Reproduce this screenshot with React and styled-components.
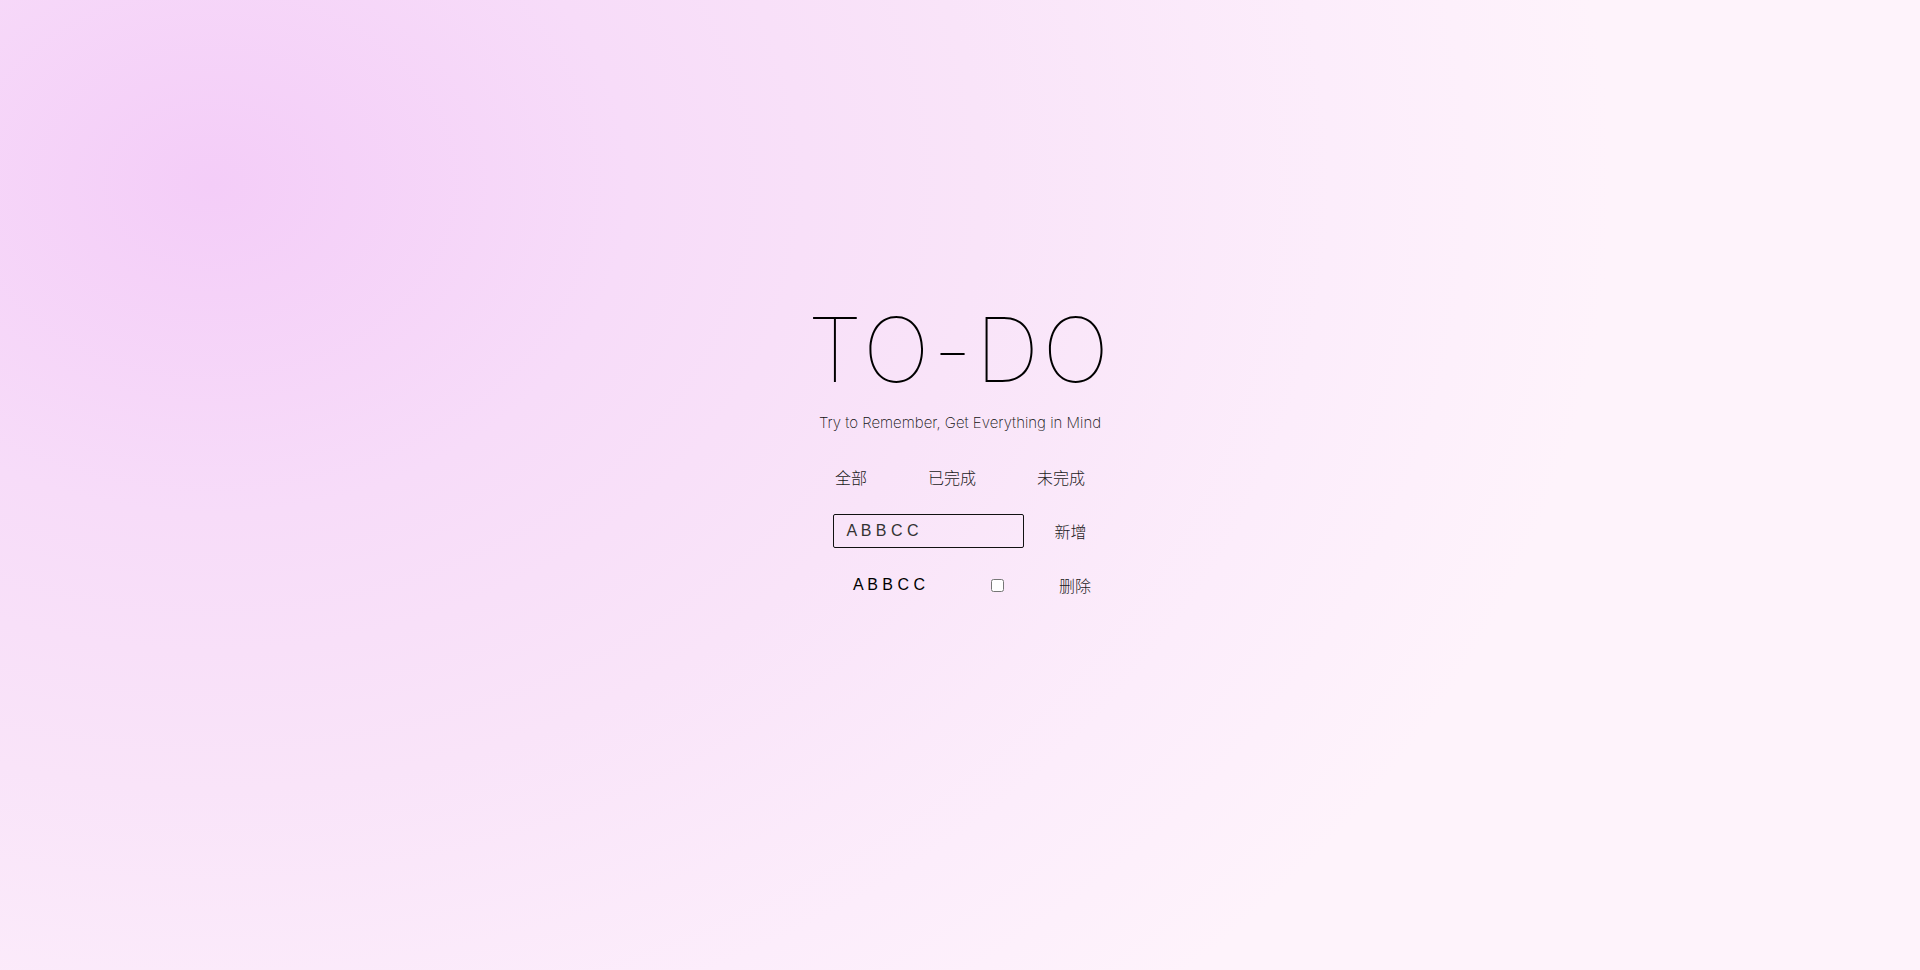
import React, { useState } from "react";
import styled, { createGlobalStyle } from "styled-components";

const GlobalStyle = createGlobalStyle`
  html, body { margin: 0; padding: 0; }
  body {
    font-family: "Liberation Sans", "Noto Sans CJK SC", sans-serif;
    color: #111;
  }
`;

const Page = styled.div`
  min-height: 970px;
  box-sizing: border-box;
  padding-top: 305px;
  display: flex;
  flex-direction: column;
  align-items: center;
  background:
    radial-gradient(ellipse 1400px 1100px at 11% 19%, #f4cdf8 0%, #f7dcf9 30%, #f9e4f9 55%, #fcedfb 80%, #fef3fb 100%);
`;

const Title = styled.h1`
  margin: 0;
  font-family: "Inter", "Lato", sans-serif;
  font-weight: 100;
  font-size: 89px;
  line-height: 1;
  letter-spacing: 3.5px;
  color: #000;
`;

const Subtitle = styled.p`
  margin: 19px 0 0;
  font-family: "Inter", "Lato", sans-serif;
  font-weight: 200;
  font-size: 15px;
  color: #111;
`;

const Filters = styled.div`
  display: flex;
  gap: 61px;
  margin-top: 33px;
`;

const TextButton = styled.button`
  border: none;
  background: transparent;
  padding: 0;
  font-family: "Noto Sans CJK SC", sans-serif;
  font-size: 16px;
  font-weight: 300;
  color: #1a1a1a;
  cursor: pointer;
`;

const InputRow = styled.div`
  display: flex;
  align-items: center;
  gap: 30px;
  margin-top: 25px;
`;

const Input = styled.input`
  width: 191px;
  height: 34px;
  box-sizing: border-box;
  border: 1px solid #111;
  border-radius: 2px;
  background: transparent;
  padding: 0 12px;
  font-family: "Liberation Sans", sans-serif;
  font-size: 16px;
  color: #333;
  outline: none;
`;

const Item = styled.div`
  display: flex;
  align-items: center;
  width: 262px;
  box-sizing: border-box;
  padding-left: 24px;
  margin-top: 25px;
`;

const ItemText = styled.span`
  width: 138px;
  font-family: "Liberation Sans", sans-serif;
  font-size: 16px;
  color: #000;
`;

const Check = styled.input`
  margin: 0;
  width: 13px;
  height: 13px;
`;

const DeleteButton = styled(TextButton)`
  margin-left: 55px;
`;

export default function App() {
  const [value, setValue] = useState("A B B C C");
  const [done, setDone] = useState(false);
  return (
    <>
      <GlobalStyle />
      <Page>
        <Title>TO-DO</Title>
        <Subtitle>Try to Remember, Get Everything in Mind</Subtitle>
        <Filters>
          <TextButton>全部</TextButton>
          <TextButton>已完成</TextButton>
          <TextButton>未完成</TextButton>
        </Filters>
        <InputRow>
          <Input value={value} onChange={(e) => setValue(e.target.value)} />
          <TextButton>新增</TextButton>
        </InputRow>
        <Item>
          <ItemText>A B B C C</ItemText>
          <Check type="checkbox" checked={done} onChange={() => setDone(!done)} />
          <DeleteButton>删除</DeleteButton>
        </Item>
      </Page>
    </>
  );
}
